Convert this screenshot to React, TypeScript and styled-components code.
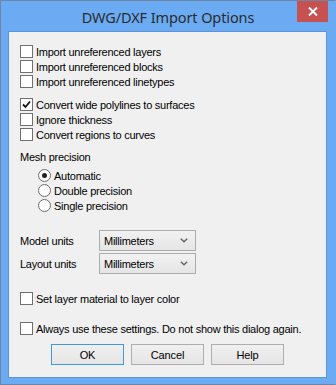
import styled, { createGlobalStyle } from "styled-components";

const GlobalStyle = createGlobalStyle`
  html, body {
    margin: 0;
    padding: 0;
    background: #6aabf4;
  }
  * {
    box-sizing: border-box;
  }
`;

const Window = styled.div`
  width: 336px;
  height: 385px;
  background: #6aabf4;
  border: 1px solid #6f86a3;
  border-right-color: #6aabf4;
  display: flex;
  flex-direction: column;
  padding: 0 8px 6px 7px;
`;

const TitleBar = styled.div`
  height: 30px;
  display: grid;
  grid-template-columns: 1fr auto 1fr;
  align-items: start;
  margin: 0 -8px 0 -7px;
`;

const Title = styled.div`
  grid-column: 2;
  font-family: "Noto Sans", "Open Sans", sans-serif;
  font-size: 14.5px;
  color: #2b2b2b;
  padding-top: 6px;
  letter-spacing: -0.1px;
`;

const CloseButton = styled.div`
  grid-column: 3;
  justify-self: end;
  margin: 0 7px 0 0;
  width: 31px;
  height: 21px;
  background: #c75050;
  display: flex;
  align-items: center;
  justify-content: center;
`;

const Panel = styled.div`
  flex: 1;
  background: #f0f0f0;
  border: 1px solid #5b95d6;
  padding: 12px 0 0 11px;
  font-family: "Liberation Sans", Arial, sans-serif;
  font-size: 11px;
  color: #000;
  display: flex;
  flex-direction: column;
`;

const Group = styled.div<{ $top?: number; $indent?: number }>`
  display: flex;
  flex-direction: column;
  margin-top: ${(p) => p.$top ?? 0}px;
  padding-left: ${(p) => p.$indent ?? 0}px;
`;

const Row = styled.label`
  height: 15px;
  display: flex;
  align-items: center;
  gap: 3px;
  white-space: nowrap;
  letter-spacing: -0.25px;
`;

const Box = styled.span`
  width: 13px;
  height: 13px;
  border: 1px solid #707070;
  background: #fff;
  display: flex;
  align-items: center;
  justify-content: center;
  flex-shrink: 0;
`;

const Radio = styled.span`
  width: 13px;
  height: 13px;
  border: 1px solid #6b6b6b;
  border-radius: 50%;
  background: #fff;
  display: flex;
  align-items: center;
  justify-content: center;
  flex-shrink: 0;
`;

const Dot = styled.span`
  width: 5px;
  height: 5px;
  border-radius: 50%;
  background: #222;
`;

const Label = styled.div`
  letter-spacing: -0.25px;
  height: 15px;
  line-height: 15px;
`;

const FieldRow = styled.div<{ $top?: number }>`
  display: grid;
  grid-template-columns: 79px 97px;
  align-items: center;
  height: 21px;
  margin-top: ${(p) => p.$top ?? 0}px;
  letter-spacing: -0.25px;
`;

const Select = styled.div`
  height: 21px;
  border: 1px solid #acacac;
  background: linear-gradient(#f2f2f2, #e5e5e5);
  display: flex;
  align-items: center;
  justify-content: space-between;
  padding: 0 7px 0 4px;
  color: #000;
`;

const Buttons = styled.div`
  display: flex;
  justify-content: center;
  gap: 7px;
  margin: 8px 0 0 -11px;
`;

const Button = styled.div<{ $default?: boolean }>`
  width: 73px;
  height: 21px;
  border: 1px solid ${(p) => (p.$default ? "#3c9ae6" : "#adadad")};
  background: linear-gradient(#f0f0f0, #e5e5e5);
  display: flex;
  align-items: center;
  justify-content: center;
  letter-spacing: -0.1px;
`;

const Check = () => (
  <svg width="9" height="9" viewBox="0 0 9 9">
    <path d="M1 4.5 L3.5 7 L8 1.5" fill="none" stroke="#111" strokeWidth="1.8" />
  </svg>
);

const Chevron = () => (
  <svg width="8" height="5" viewBox="0 0 8 5">
    <path d="M0.8 0.8 L4 3.8 L7.2 0.8" fill="none" stroke="#666" strokeWidth="1.5" />
  </svg>
);

const CloseIcon = () => (
  <svg width="10" height="9" viewBox="0 0 10 9">
    <path d="M1 0.5 L9 8.5 M9 0.5 L1 8.5" stroke="#fff" strokeWidth="2" />
  </svg>
);

const CheckRow = ({ label, checked }: { label: string; checked?: boolean }) => (
  <Row>
    <Box>{checked && <Check />}</Box>
    {label}
  </Row>
);

const RadioRow = ({ label, checked }: { label: string; checked?: boolean }) => (
  <Row>
    <Radio>{checked && <Dot />}</Radio>
    {label}
  </Row>
);

export default function App() {
  return (
    <>
      <GlobalStyle />
      <Window>
        <TitleBar>
          <Title>DWG/DXF Import Options</Title>
          <CloseButton>
            <CloseIcon />
          </CloseButton>
        </TitleBar>
        <Panel>
          <Group>
            <CheckRow label="Import unreferenced layers" />
            <CheckRow label="Import unreferenced blocks" />
            <CheckRow label="Import unreferenced linetypes" />
          </Group>
          <Group $top={8}>
            <CheckRow label="Convert wide polylines to surfaces" checked />
            <CheckRow label="Ignore thickness" />
            <CheckRow label="Convert regions to curves" />
          </Group>
          <Group $top={8}>
            <Label>Mesh precision</Label>
            <Group $top={3} $indent={18}>
              <RadioRow label="Automatic" checked />
              <RadioRow label="Double precision" />
              <RadioRow label="Single precision" />
            </Group>
          </Group>
          <FieldRow $top={17}>
            <span>Model units</span>
            <Select>
              Millimeters
              <Chevron />
            </Select>
          </FieldRow>
          <FieldRow $top={2}>
            <span>Layout units</span>
            <Select>
              Millimeters
              <Chevron />
            </Select>
          </FieldRow>
          <Group $top={17}>
            <CheckRow label="Set layer material to layer color" />
          </Group>
          <Group $top={15}>
            <CheckRow label="Always use these settings. Do not show this dialog again." />
          </Group>
          <Buttons>
            <Button $default>OK</Button>
            <Button>Cancel</Button>
            <Button>Help</Button>
          </Buttons>
        </Panel>
      </Window>
    </>
  );
}
